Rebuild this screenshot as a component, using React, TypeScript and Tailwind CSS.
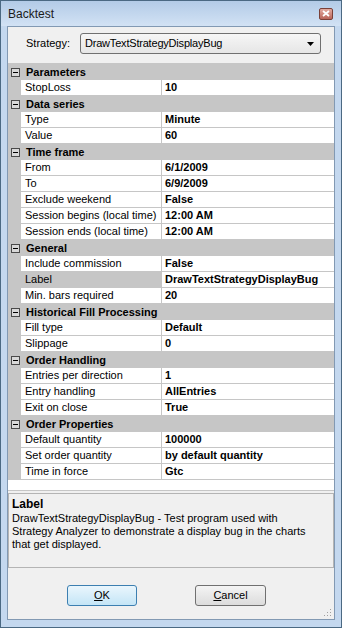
import React from "react";

type Row = { name: string; value: string; selected?: boolean };
type Category = { title: string; rows: Row[] };

const categories: Category[] = [
  { title: "Parameters", rows: [{ name: "StopLoss", value: "10" }] },
  {
    title: "Data series",
    rows: [
      { name: "Type", value: "Minute" },
      { name: "Value", value: "60" },
    ],
  },
  {
    title: "Time frame",
    rows: [
      { name: "From", value: "6/1/2009" },
      { name: "To", value: "6/9/2009" },
      { name: "Exclude weekend", value: "False" },
      { name: "Session begins (local time)", value: "12:00 AM" },
      { name: "Session ends (local time)", value: "12:00 AM" },
    ],
  },
  {
    title: "General",
    rows: [
      { name: "Include commission", value: "False" },
      { name: "Label", value: "DrawTextStrategyDisplayBug", selected: true },
      { name: "Min. bars required", value: "20" },
    ],
  },
  {
    title: "Historical Fill Processing",
    rows: [
      { name: "Fill type", value: "Default" },
      { name: "Slippage", value: "0" },
    ],
  },
  {
    title: "Order Handling",
    rows: [
      { name: "Entries per direction", value: "1" },
      { name: "Entry handling", value: "AllEntries" },
      { name: "Exit on close", value: "True" },
    ],
  },
  {
    title: "Order Properties",
    rows: [
      { name: "Default quantity", value: "100000" },
      { name: "Set order quantity", value: "by default quantity" },
      { name: "Time in force", value: "Gtc" },
    ],
  },
];

function MinusBox() {
  return (
    <div className="w-[9px] h-[9px] border border-[#4a4a4a] bg-[#d8d8d8] flex items-center justify-center">
      <div className="w-[5px] h-[1px] bg-black" />
    </div>
  );
}

export default function App() {
  return (
    <div
      className="w-[342px] h-[628px] flex flex-col border border-[#4b6983] bg-[#c4d8ef] text-[11px] text-black"
      style={{ fontFamily: '"Liberation Sans", Arial, sans-serif' }}
    >
      {/* title bar */}
      <div className="h-[25px] flex items-center justify-between pl-[7px] pr-[8px] bg-gradient-to-b from-[#b3cbe7] to-[#d2e2f4]">
        <span className="text-[12px] text-[#1b1b1b]">Backtest</span>
        <div className="w-[14px] h-[12px] rounded-[2px] border border-[#7a4038] bg-gradient-to-b from-[#e2aaa0] to-[#b9655a] flex items-center justify-center">
          <svg width="8" height="7" viewBox="0 0 8 7">
            <path d="M1 1 L7 6 M7 1 L1 6" stroke="white" strokeWidth="1.8" />
          </svg>
        </div>
      </div>

      {/* client area */}
      <div className="flex-1 mx-[6px] mb-[7px] border border-[#8299b3] bg-[#f0f0f0] flex flex-col">
        {/* strategy row */}
        <div className="flex items-center pt-[6px] pl-[18px]">
          <span className="w-[54px]">Strategy:</span>
          <div className="w-[241px] h-[21px] rounded-[3px] border border-[#707070] bg-gradient-to-b from-[#f6f6f6] to-[#e6e6e6] flex items-center justify-between pl-[4px] pr-[6px]">
            <span className="tracking-[-0.2px]">DrawTextStrategyDisplayBug</span>
            <svg width="7" height="4" viewBox="0 0 7 4">
              <path d="M0 0 H7 L3.5 4 Z" fill="black" />
            </svg>
          </div>
        </div>

        {/* property grid */}
        <div className="mt-[9px] h-[428px] bg-white border-t border-b border-[#c6c6c6] flex flex-col">
          {categories.map((cat) => (
            <React.Fragment key={cat.title}>
              <div className="h-[16px] flex items-center bg-[#c6c6c6]">
                <div className="w-[13px] pl-[3px] flex items-center">
                  <MinusBox />
                </div>
                <span className="pl-[5px] font-bold">{cat.title}</span>
              </div>
              {cat.rows.map((r) => (
                <div key={r.name} className="h-[16px] flex">
                  <div className="w-[13px] bg-[#c6c6c6]" />
                  <div
                    className={`w-[140px] pl-[4px] border-b border-[#c6c6c6] flex items-center whitespace-nowrap ${
                      r.selected ? "bg-[#c6c6c6]" : "bg-white"
                    }`}
                  >
                    {r.name}
                  </div>
                  <div className="w-[1px] bg-[#c6c6c6]" />
                  <div className="flex-1 pl-[3px] border-b border-[#c6c6c6] flex items-center font-bold whitespace-nowrap">
                    {r.value}
                  </div>
                </div>
              ))}
            </React.Fragment>
          ))}
        </div>

        {/* help panel */}
        <div className="mt-[2px] h-[75px] border border-[#b4b4b4] bg-[#f0f0f0] px-[3px] pt-[3px] leading-[13px]">
          <div className="font-bold text-[12px] leading-[15px]">Label</div>
          <div>DrawTextStrategyDisplayBug - Test program used with</div>
          <div>Strategy Analyzer to demonstrate a display bug in the charts</div>
          <div>that get displayed.</div>
        </div>

        {/* buttons */}
        <div className="flex mt-[17px] pl-[59px] gap-[58px]">
          <div className="w-[70px] h-[21px] rounded-[3px] border border-[#3c7fb1] bg-gradient-to-b from-[#eaf6fd] to-[#c4e5f6] flex items-center justify-center">
            <span>
              <span className="underline">O</span>K
            </span>
          </div>
          <div className="w-[71px] h-[21px] rounded-[3px] border border-[#707070] bg-gradient-to-b from-[#f4f4f4] to-[#dcdcdc] flex items-center justify-center">
            <span>
              <span className="underline">C</span>ancel
            </span>
          </div>
        </div>
        <div className="flex-1 flex items-end justify-end pr-[2px] pb-[2px]">
          <svg width="8" height="8" viewBox="0 0 8 8">
            <rect x="6" y="0" width="1" height="1" fill="#a0a0a0" />
            <rect x="3" y="3" width="1" height="1" fill="#a0a0a0" />
            <rect x="6" y="3" width="1" height="1" fill="#a0a0a0" />
            <rect x="0" y="6" width="1" height="1" fill="#a0a0a0" />
            <rect x="3" y="6" width="1" height="1" fill="#a0a0a0" />
            <rect x="6" y="6" width="1" height="1" fill="#a0a0a0" />
          </svg>
        </div>
      </div>
    </div>
  );
}
